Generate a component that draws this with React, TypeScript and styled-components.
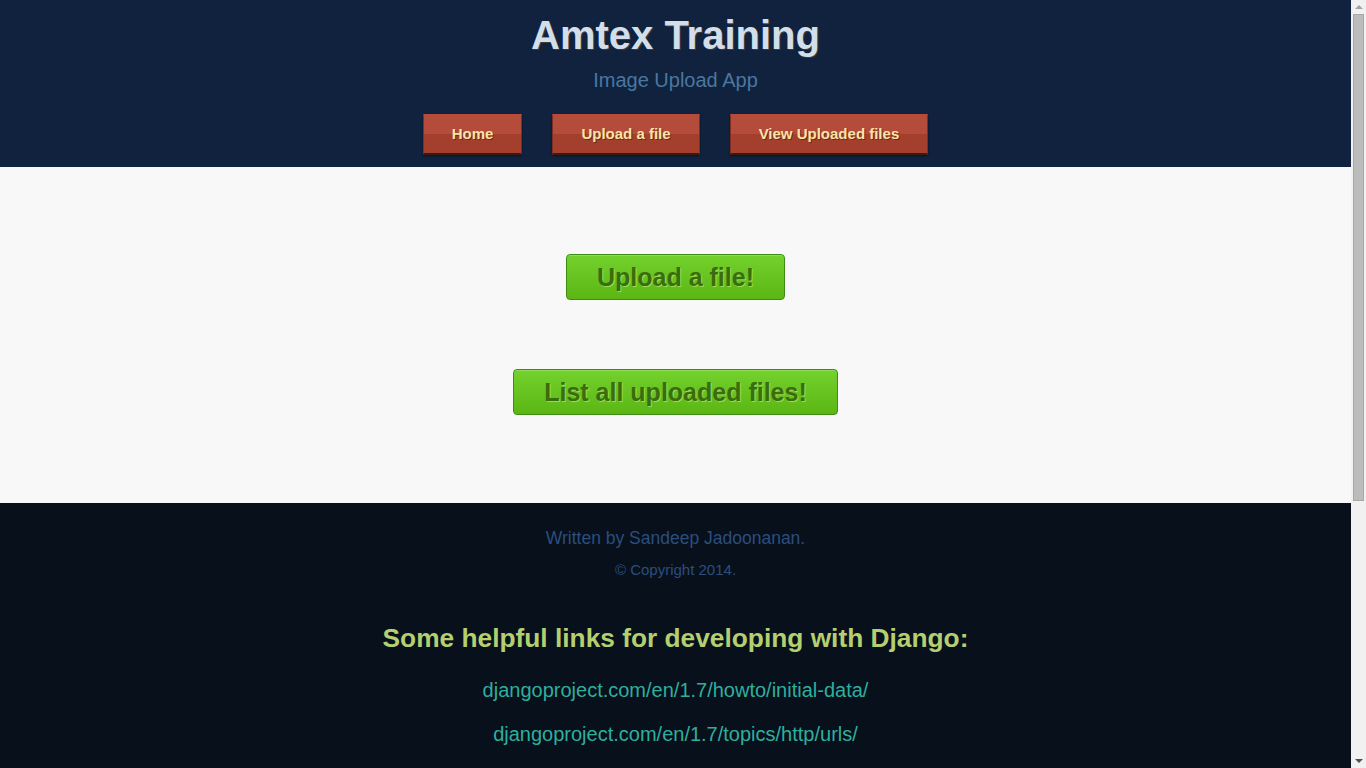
import React from "react";
import styled, { createGlobalStyle } from "styled-components";

const Global = createGlobalStyle`
  html, body { margin: 0; padding: 0; }
  body {
    font-family: "Liberation Sans", Arial, sans-serif;
    background: #f8f8f8;
    margin-right: 15px;
  }
  * { box-sizing: border-box; }
`;

const Header = styled.header`
  background: #10223d;
  display: flex;
  flex-direction: column;
  align-items: center;
  padding: 12px 0 12px;
`;

const Title = styled.h1`
  margin: 0;
  font-size: 40px;
  line-height: 46px;
  font-weight: bold;
  color: #d2dee9;
  text-shadow: 1px 1px 0 rgba(120, 90, 60, 0.45);
`;

const Subtitle = styled.p`
  margin: 11px 0 0;
  font-size: 20px;
  line-height: 23px;
  color: #4a77a1;
`;

const Nav = styled.nav`
  display: flex;
  gap: 30px;
  margin-top: 22px;
`;

const NavButton = styled.a`
  display: flex;
  align-items: center;
  justify-content: center;
  height: 41px;
  padding: 0 28px 1px;
  font-size: 15px;
  font-weight: bold;
  color: #fbe3a5;
  text-decoration: none;
  text-shadow: 1px 1px 0 rgba(60, 20, 10, 0.55);
  background: linear-gradient(to bottom, #b54b3b 0%, #b54b3b 50%, #a53f2d 50%, #a53f2d 100%);
  border: 1px solid #7e2e22;
  border-top-color: #b54b3b;
  border-bottom: 2px solid #3a1a14;
  box-shadow: 0 1px 2px rgba(0, 0, 0, 0.4);
`;

const Main = styled.main`
  background: #f8f8f8;
  height: 336px;
  display: flex;
  flex-direction: column;
  align-items: center;
  padding-top: 87px;
  gap: 69px;
`;

const GreenButton = styled.a`
  display: flex;
  align-items: center;
  justify-content: center;
  height: 46px;
  padding: 0 30px;
  font-size: 25px;
  font-weight: bold;
  color: #3b6c0d;
  text-decoration: none;
  text-shadow: 1px 1px 0 rgba(190, 240, 130, 0.6);
  background: linear-gradient(to bottom, #74d22d 0%, #5bb614 100%);
  border: 1px solid #3e8c14;
  border-radius: 4px;
  box-shadow: inset 0 1px 0 rgba(255, 255, 255, 0.2);
`;

const Footer = styled.footer`
  background: #08101c;
  display: flex;
  flex-direction: column;
  align-items: center;
  padding: 24px 0 400px;
`;

const Credit = styled.p`
  margin: 0;
  font-size: 17.5px;
  line-height: 22px;
  color: #2b4e7d;
`;

const Copyright = styled.p`
  margin: 12px 0 0;
  font-size: 15px;
  line-height: 18px;
  color: #2b4e7d;
`;

const LinksHeading = styled.h2`
  margin: 44px 0 0;
  font-size: 26.3px;
  line-height: 30px;
  font-weight: bold;
  color: #b4cf6f;
`;

const LinkList = styled.div`
  display: flex;
  flex-direction: column;
  align-items: center;
  gap: 21px;
  margin-top: 26px;
`;

const DocLink = styled.a`
  font-size: 20px;
  line-height: 23px;
  color: #2eaf9c;
  text-decoration: none;
`;

const ScrollTrack = styled.div`
  position: fixed;
  top: 0;
  right: 0;
  width: 15px;
  height: 100vh;
  background: #f1f1f1;
  display: flex;
  flex-direction: column;
  align-items: center;
  padding: 0 2px;
`;

const Arrow = styled.div<{ $down?: boolean }>`
  width: 0;
  height: 0;
  margin: ${(p) => (p.$down ? "auto 0 5px" : "5px 0 0")};
  border-left: 4px solid transparent;
  border-right: 4px solid transparent;
  ${(p) => (p.$down ? "border-top: 4px solid #505050;" : "border-bottom: 4px solid #a3a3a3;")}
`;

const Thumb = styled.div`
  width: 11px;
  height: 487px;
  margin-top: 5px;
  background: #bcbcbc;
  border: 1px solid #a8a8a8;
`;

export default function App() {
  return (
    <>
      <Global />
      <Header>
        <Title>Amtex Training</Title>
        <Subtitle>Image Upload App</Subtitle>
        <Nav>
          <NavButton href="#">Home</NavButton>
          <NavButton href="#">Upload a file</NavButton>
          <NavButton href="#">View Uploaded files</NavButton>
        </Nav>
      </Header>
      <Main>
        <GreenButton href="#">Upload a file!</GreenButton>
        <GreenButton href="#">List all uploaded files!</GreenButton>
      </Main>
      <Footer>
        <Credit>Written by Sandeep Jadoonanan.</Credit>
        <Copyright>© Copyright 2014.</Copyright>
        <LinksHeading>Some helpful links for developing with Django:</LinksHeading>
        <LinkList>
          <DocLink href="#">djangoproject.com/en/1.7/howto/initial-data/</DocLink>
          <DocLink href="#">djangoproject.com/en/1.7/topics/http/urls/</DocLink>
        </LinkList>
      </Footer>
      <ScrollTrack>
        <Arrow />
        <Thumb />
        <Arrow $down />
      </ScrollTrack>
    </>
  );
}
